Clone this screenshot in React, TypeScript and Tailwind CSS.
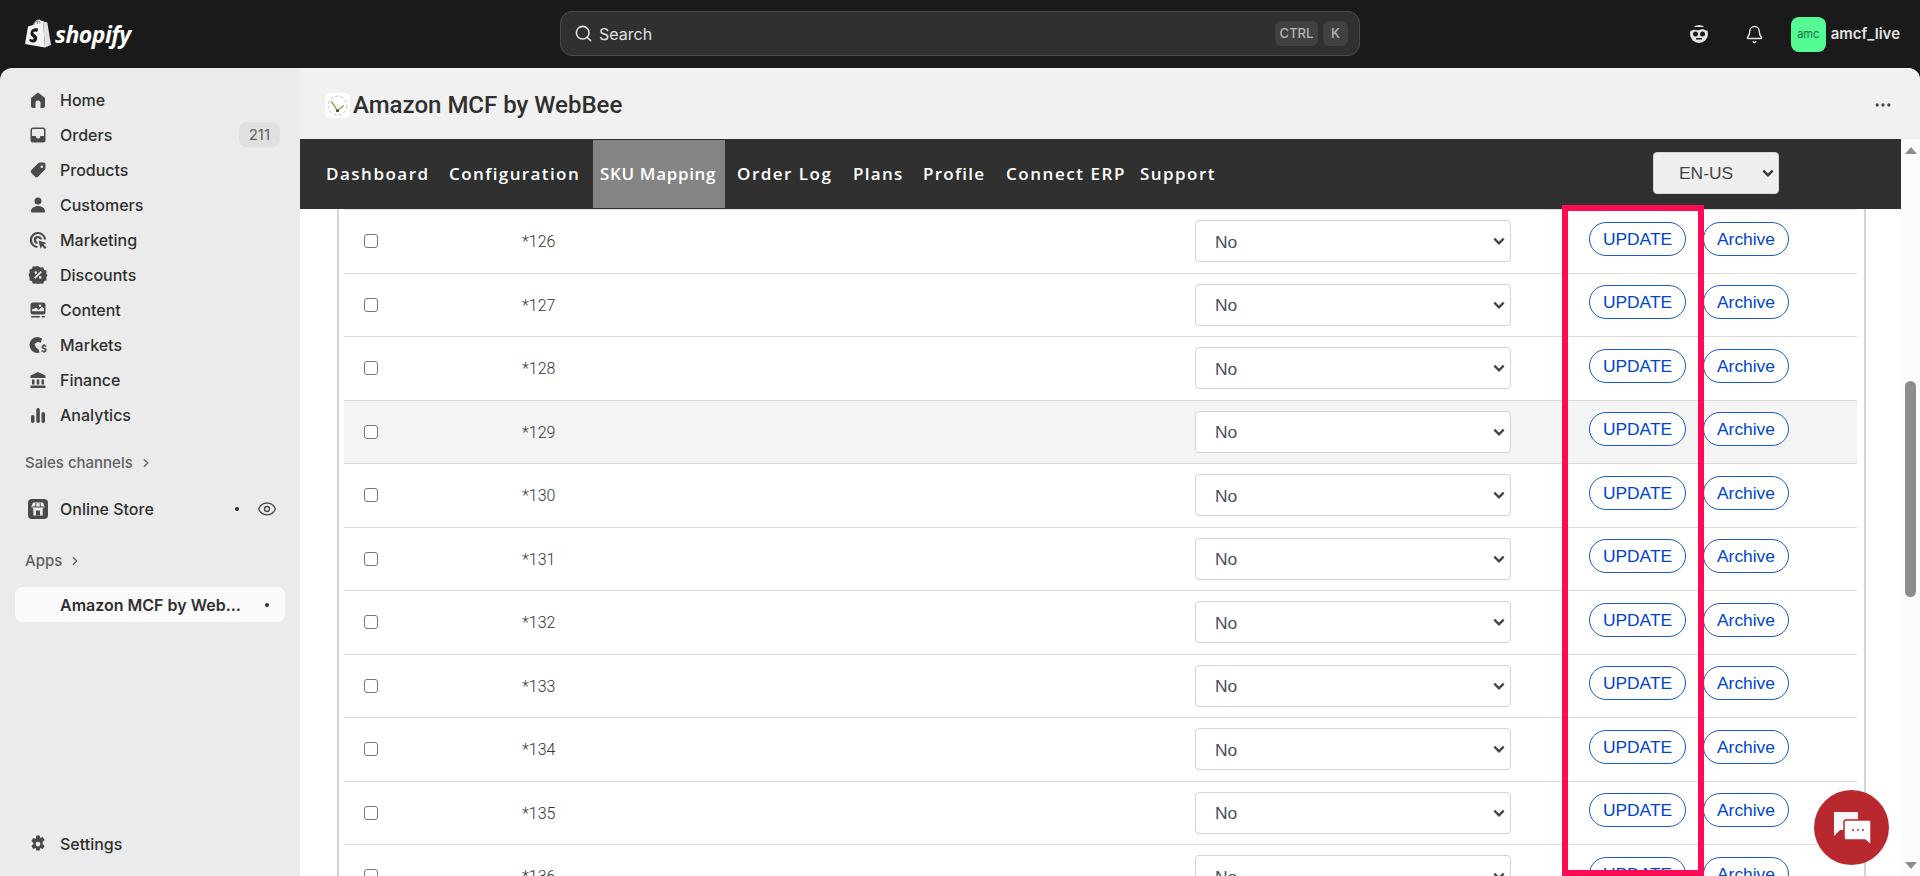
import { ChevronRight, Eye, Search, Bell, Ellipsis } from "lucide-react";

const SKUS = [126, 127, 128, 129, 130, 131, 132, 133, 134, 135, 136];
const TABS = [
  { label: "Dashboard", cls: "w-[123px] tracking-[1.500px]" },
  { label: "Configuration", cls: "w-[144px] tracking-[1.400px]" },
  { label: "SKU Mapping", cls: "w-[132px] h-[68px] leading-[68px] pl-[7px] bg-[#848484] tracking-[0.650px]" },
  { label: "Order Log", cls: "w-[116px] ml-[12px] tracking-[1.500px]" },
  { label: "Plans", cls: "w-[70px] tracking-[1.300px]" },
  { label: "Profile", cls: "w-[83px] tracking-[1.250px]" },
  { label: "Connect ERP", cls: "w-[134px] tracking-[1.550px]" },
  { label: "Support", cls: "w-[90px] tracking-[1.450px]" },
];

function NavIcon({ name }: { name: string }) {
  const paths: Record<string, React.ReactNode> = {
    Home: <path d="M10 2.500 3 8v8a2 2 0 0 0 2 2h2.500v-5a2.500 2.500 0 0 1 5 0v5H15a2 2 0 0 0 2-2V8z" />,
    Orders: <path fillRule="evenodd" d="M5 2.500h10A2.500 2.500 0 0 1 17.500 5v10a2.500 2.500 0 0 1-2.500 2.500H5A2.500 2.500 0 0 1 2.500 15V5A2.500 2.500 0 0 1 5 2.500M4 5v6h3c.500 0 1 .500 1 1s1 1.500 2 1.500 2-.500 2-1.500.500-1 1-1h3V5a1 1 0 0 0-1-1H5a1 1 0 0 0-1 1" />,
    Products: <path fillRule="evenodd" d="M12 2.500h3.500a2 2 0 0 1 2 2V8a3 3 0 0 1-.900 2.100l-6.300 6.400a2.500 2.500 0 0 1-3.500 0l-3.300-3.300a2.500 2.500 0 0 1 0-3.500l6.400-6.300A3 3 0 0 1 12 2.500m1.800 3a1.300 1.300 0 1 0 0 2.600 1.300 1.300 0 0 0 0-2.600" />,
    Customers: <path d="M10 2.500a3.500 3.500 0 1 1 0 7 3.500 3.500 0 0 1 0-7M3 16.300c0-3 3-5.300 7-5.300s7 2.300 7 5.300c0 .900-.700 1.200-1.500 1.200h-11C3.700 17.500 3 17.200 3 16.300" />,
    Marketing: (
      <>
        <path d="M10 2a8 8 0 0 1 8 7.500h-2A6 6 0 1 0 9.500 16v2A8 8 0 0 1 10 2m0 4a4 4 0 0 1 4 3.500h-2A2 2 0 1 0 9.500 12v2A4 4 0 0 1 10 6" />
        <path d="m10.500 10.500 8 2.500-3 1.500 3 3-1.500 1.500-3-3-1.500 3z" />
      </>
    ),
    Discounts: <path fillRule="evenodd" d="M10 1l2.300 1.600 2.800-.300 1 2.500 2.500 1-.300 2.800L19.500 10l-1.200 2.400.300 2.800-2.500 1-1 2.500-2.800-.300L10 19l-2.300-.600-2.800.300-1-2.500-2.500-1 .300-2.800L.500 10l1.200-2.400-.300-2.800 2.500-1 1-2.500 2.800.300zM7.800 6.300a1.300 1.300 0 1 0 0 2.600 1.300 1.300 0 0 0 0-2.600m4.400 4.800a1.300 1.300 0 1 0 0 2.600 1.300 1.300 0 0 0 0-2.600M12.700 6 6.200 12.600l1.200 1.200 6.500-6.600z" />,
    Content: (
      <>
        <path fillRule="evenodd" d="M5 2.500h10A2.500 2.500 0 0 1 17.500 5v7a2.500 2.500 0 0 1-2.500 2.500H5A2.500 2.500 0 0 1 2.500 12V5A2.500 2.500 0 0 1 5 2.500M4 9.500v1.800h12V8.500l-2.200-1.800-3 3.200L8 7.800zM12 4.500a1.200 1.200 0 0 0 0 2.400 1.200 1.200 0 0 0 0-2.400" />
        <rect x="3" y="16" width="9" height="1.500" rx=".75" />
        <rect x="13.500" y="16" width="3.500" height="1.500" rx=".75" />
      </>
    ),
    Markets: (
      <>
        <path d="M9.500 2a8 8 0 0 0 0 16c1 0 1.500-.100 2.300-.400-.800-1-1-2-1-3.100L8 12.500 6.500 9l3-2 3.500.500 1-4A8 8 0 0 0 9.500 2" />
        <path d="M15.500 9v1.100c-1.200.200-2 1-2 2 0 2.400 3.400 1.700 3.400 3 0 .500-.600.800-1.200.800-.700 0-1.300-.300-1.700-.800l-.900.900c.500.600 1.300 1 2.400 1.100V18h1.200v-1c1.200-.200 2-1 2-2.100 0-2.500-3.400-1.700-3.400-2.900 0-.400.400-.700 1-.700s1.100.300 1.400.700l1-.800c-.500-.700-1.200-1-2-1.100V9z" />
      </>
    ),
    Finance: <path d="M10 2 17.500 5.500V8h-15V5.500zM4 9.500h2.500v5H4zm4.700 0h2.600v5H8.700zm4.800 0H16v5h-2.500zM2.500 15.500h15V18h-15z" />,
    Analytics: (
      <>
        <rect x="3" y="10" width="3.500" height="8" rx="1.750" />
        <rect x="8.300" y="3" width="3.500" height="15" rx="1.750" />
        <rect x="13.500" y="7" width="3.500" height="11" rx="1.750" />
      </>
    ),
    Settings: <path fillRule="evenodd" d="M8.300 1.500h3.400l.600 2.500 2.500-.900 1.800 3-2 1.800v2.200l2 1.800-1.800 3-2.500-.900-.600 2.500H8.300l-.600-2.500-2.500.900-1.800-3 2-1.800V8.900l-2-1.800 1.800-3 2.500.900zM10 7.700a2.400 2.400 0 1 0 0 4.800 2.400 2.400 0 0 0 0-4.800" />,
  };
  return (
    <svg viewBox="0 0 20 20" className="size-5 shrink-0 fill-[#4a4a4a]">
      {paths[name]}
    </svg>
  );
}

function ShopifyLogo() {
  return (
    <div className="flex items-center gap-[4px]">
      <svg viewBox="0 0 26 30" className="w-[26px] h-[30px]">
        <path d="M3 7.500 8 6c1-3 3-5.500 6-5.500 1 0 1.500.500 2 1.500l2-.300L20 28.500 0 25z" fill="#f5f5f5" />
        <path d="M18 1.700l1.500 1.300 2.500.200c.100 0 .300.100.300.300L26 26l-6 2.500z" fill="#e2e2e2" />
        <path d="M13 10.500l-.800 2.500s-1-.500-2-.500c-1.700 0-1.800 1-1.800 1.300 0 1.400 3.800 2 3.800 5.400 0 2.600-1.700 4.300-4 4.300-2.700 0-4-1.700-4-1.700l.700-2.400s1.400 1.200 2.600 1.200c.800 0 1.100-.600 1.100-1.100 0-1.900-3.100-2-3.100-5.100 0-2.600 1.900-5.200 5.700-5.200 1.200 0 1.800.300 1.800.300" fill="#1a1a1a" />
        <path d="M9 6c.500-2 1.800-4 3.500-4.500M12.500 5c0-1.500.200-2.500.800-3.500M15 4.500c0-1-.200-1.800-.500-2.300" stroke="#1a1a1a" strokeWidth=".6" fill="none" />
      </svg>
      <span className="font-['Open_Sans',sans-serif] italic font-bold text-[23px] leading-none tracking-[-0.5px] text-white">shopify</span>
    </div>
  );
}

function SideItem({ name, badge }: { name: string; badge?: string }) {
  return (
    <div className="flex items-center h-[35px] pl-[28px] pr-[20px] gap-[12px]">
      <NavIcon name={name} />
      <span className="flex-1 text-[16px] font-medium text-[#303030]">{name}</span>
      {badge && (
        <span className="h-[25px] px-[10px] rounded-[8px] bg-[#e0e0e0] text-[15px] leading-[25px] text-[#616161]">{badge}</span>
      )}
    </div>
  );
}

function Sidebar() {
  return (
    <aside className="w-[300px] shrink-0 bg-[#ebebeb] rounded-tl-[12px] flex flex-col pt-[14px] pb-[15px] font-['Inter',sans-serif]">
      {["Home", "Orders", "Products", "Customers", "Marketing", "Discounts", "Content", "Markets", "Finance", "Analytics"].map((n) => (
        <SideItem key={n} name={n} badge={n === "Orders" ? "211" : undefined} />
      ))}
      <div className="flex items-center gap-[6px] pl-[25px] h-[20px] mt-[21px] text-[15px] font-medium text-[#616161]">
        Sales channels <ChevronRight size={14} strokeWidth={2} />
      </div>
      <div className="flex items-center h-[35px] mt-[18px] pl-[28px] pr-[23px] gap-[12px]">
        <svg viewBox="0 0 20 20" className="size-5 shrink-0">
          <rect x="0" y="0" width="20" height="20" rx="4" fill="#4a4a4a" />
          <path d="M5 3.500h10l1.500 4c0 1.300-1 2-1.800 2v7H5.300v-7c-.800 0-1.800-.700-1.800-2z" fill="#ebebeb" />
          <path d="M4 7.500h12v1H4zM8 11.500h4v5H8zM7.500 4h1l-.500 4h-1zM11.500 4h1l.500 4h-1z" fill="#4a4a4a" />
        </svg>
        <span className="flex-1 text-[16px] font-medium text-[#303030]">Online Store</span>
        <span className="size-[4px] rounded-full bg-[#303030] mr-[6px]" />
        <Eye size={20} strokeWidth={1.6} className="text-[#4a4a4a]" />
      </div>
      <div className="flex items-center gap-[6px] pl-[25px] h-[20px] mt-[25px] text-[15px] font-medium text-[#616161]">
        Apps <ChevronRight size={14} strokeWidth={2} />
      </div>
      <div className="mx-[15px] mt-[16px] h-[35px] rounded-[8px] bg-[#fafafa] flex items-center pl-[45px] pr-[16px] gap-[12px]">
        <span className="flex-1 text-[16px] font-semibold text-[#303030] whitespace-nowrap">Amazon MCF by Web...</span>
        <span className="size-[4px] rounded-full bg-[#303030]" />
      </div>
      <div className="mt-auto">
        <SideItem name="Settings" />
      </div>
    </aside>
  );
}

function Row({ sku }: { sku: number }) {
  return (
    <div className={`flex items-center h-[63.5px] shrink-0 border-t border-[#dcdcdc] ${sku === 129 ? "bg-[#f4f4f4]" : ""}`}>
      <div className="w-[44px] pl-[20px]">
        <span className="block size-[14px] rounded-[3px] border border-[#767676] bg-white" />
      </div>
      <div className="w-[807px] pl-[134px] pt-[2px] font-['Roboto',sans-serif] font-light text-[16px] text-[#333]">*{sku}</div>
      <div className="w-[316px] h-[42px] shrink-0 rounded-[4px] border border-[#ced4da] bg-white flex items-center justify-between pl-[19px] pr-[4px] text-[17.400px] text-[#495057]">
        <span className="pt-[1px]">No</span>
        <svg viewBox="0 0 12 12" className="size-[14px]"><path d="M2 4l4 4 4-4" fill="none" stroke="#444" strokeWidth="2" /></svg>
      </div>
      <div className="ml-[78px] mb-[5px] flex gap-[17px]">
        <button className="w-[97px] h-[34px] rounded-full bg-white border border-[#1a56cc] text-[17.400px] text-[#0044cc]">UPDATE</button>
        <button className="w-[86px] h-[34px] rounded-full bg-white border border-[#1a56cc] text-[17.400px] text-[#0044cc]">Archive</button>
      </div>
    </div>
  );
}

function TabBar() {
  return (
    <div className="h-[70px] shrink-0 bg-[#303030] flex items-center pl-[26px] font-['Open_Sans',sans-serif] text-[17px] font-semibold text-white">
      {TABS.map((t) => (
        <span key={t.label} className={`${t.cls} shrink-0 whitespace-nowrap`}>{t.label}</span>
      ))}
      <div className="ml-auto mr-[122px] mb-[2px] w-[126px] h-[42px] rounded-[4px] bg-[#efefef] border border-[#d5d5d5] flex items-center justify-between pl-[25px] pr-[3px] font-['Liberation_Sans',sans-serif] font-normal tracking-normal text-[17.400px] text-[#444]">
        EN-US
        <svg viewBox="0 0 12 12" className="size-[14px]"><path d="M2 4l4 4 4-4" fill="none" stroke="#333" strokeWidth="2" /></svg>
      </div>
    </div>
  );
}

export default function App() {
  return (
    <div className="h-[876px] w-full bg-[#1a1a1a] flex flex-col overflow-hidden font-['Liberation_Sans',sans-serif] relative">
      {/* Top bar */}
      <header className="h-[68px] shrink-0 flex items-center pl-[25px] pr-[20px] relative">
        <ShopifyLogo />
        <div className="absolute left-[560px] top-[11px] w-[800px] h-[45px] rounded-[12px] bg-[#303030] border border-[#4a4a4a] flex items-center pl-[13px] pr-[11px] font-['Inter',sans-serif]">
          <Search size={19} className="text-[#e3e3e3]" />
          <span className="ml-[6px] flex-1 text-[16px] text-[#e3e3e3]">Search</span>
          <span className="h-[25px] w-[43px] text-center rounded-[6px] bg-[#414141] text-[13px] font-medium leading-[25px] text-[#b5b5b5]">CTRL</span>
          <span className="ml-[5px] h-[25px] w-[25px] text-center rounded-[6px] bg-[#414141] text-[13px] font-medium leading-[25px] text-[#b5b5b5]">K</span>
        </div>
        <div className="ml-auto flex items-center font-['Inter',sans-serif]">
          <svg viewBox="0 0 20 20" className="size-5 mr-[36px]">
            <circle cx="10" cy="10" r="9" fill="#e3e3e3" />
            <path d="M2 7c3-3 5 0 8-1s5-1 8 1v-4H2z" fill="#1a1a1a" />
            <circle cx="6.500" cy="10" r="2.500" fill="#1a1a1a" />
            <circle cx="13.500" cy="10" r="2.500" fill="#1a1a1a" />
            <rect x="7" y="14" width="6" height="1.500" fill="#1a1a1a" />
          </svg>
          <Bell size={19} strokeWidth={1.8} className="text-[#e3e3e3] mr-[27px]" />
          <span className="size-[35px] rounded-[8px] bg-[#54fb93] text-center text-[11px] leading-[35px] text-[#1b6b43]">amc</span>
          <span className="ml-[5px] text-[15px] font-semibold text-[#e3e3e3]">amcf_live</span>
        </div>
      </header>

      <div className="flex-1 flex min-h-0">
        <Sidebar />
        <main className="flex-1 min-w-0 bg-white rounded-tr-[12px] overflow-hidden flex flex-col">
          {/* App title bar */}
          <div className="h-[71px] shrink-0 bg-[#f1f1f1] flex items-center pt-[3px] pl-[25px] pr-[27px]">
            <svg viewBox="0 0 24 24" className="size-[25px] shrink-0 rounded-[5px] bg-white">
              <circle cx="12" cy="12" r="9" fill="none" stroke="#ccc" strokeWidth="1" strokeDasharray="3 2" />
              <path d="M6 8l6 9 6-5" fill="none" stroke="#8cb04a" strokeWidth="1.500" />
              <circle cx="12" cy="17" r="1.500" fill="#445" />
            </svg>
            <span className="ml-[3px] flex-1 font-['Roboto',sans-serif] text-[24px] font-medium text-[#303030]">Amazon MCF by WebBee</span>
            <Ellipsis size={20} className="text-[#4a4a4a]" />
          </div>

          <div className="flex-1 min-h-0 flex">
            <div className="flex-1 min-w-0 flex flex-col">
              <TabBar />
              {/* SKU table */}
              <div className="flex-1 min-h-0 pl-[37px] pr-[35px] overflow-hidden">
                <div className="h-full border-x-2 border-[#d4d4d4] pl-[5px] pr-[7px] overflow-hidden">
                  {SKUS.map((s) => <Row key={s} sku={s} />)}
                </div>
              </div>
            </div>
            {/* Scrollbar */}
            <div className="w-[19px] shrink-0 bg-[#fbfbfb] flex flex-col items-center justify-between pt-[8px] pb-[7px] relative">
              <span className="w-0 h-0 border-x-[6.500px] border-x-transparent border-b-[7px] border-b-[#8c8c8c]" />
              <span className="absolute left-[4px] top-[242px] w-[11px] h-[216px] bg-[#8c8c8c] rounded-[6px]" />
              <span className="w-0 h-0 border-x-[6.500px] border-x-transparent border-t-[7px] border-t-[#8c8c8c]" />
            </div>
          </div>
        </main>
      </div>

      {/* Red highlight annotation */}
      <div className="absolute left-[1562px] top-[205px] w-[142px] h-[671px] border-[6px] border-[#ff0a54] pointer-events-none" />

      {/* Chat widget */}
      <div className="absolute left-[1814px] top-[790px] size-[75px] rounded-full bg-[#b8292f] flex items-center justify-center">
        <svg viewBox="0 0 40 34" className="w-[40px] h-[34px]">
          <path d="M2 1h23a1 1 0 0 1 1 1v16a1 1 0 0 1-1 1H8l-6 6z" fill="#f6f6f6" />
          <path d="M14 9h24a1 1 0 0 1 1 1v24l-6-5H14a2 2 0 0 1-2-2V11a2 2 0 0 1 2-2z" fill="#fff" stroke="#b8292f" strokeWidth="1.500" />
          <circle cx="21" cy="19" r="1" fill="#b8292f" />
          <circle cx="26" cy="19" r="1" fill="#b8292f" />
          <circle cx="31" cy="19" r="1" fill="#b8292f" />
        </svg>
      </div>
    </div>
  );
}
